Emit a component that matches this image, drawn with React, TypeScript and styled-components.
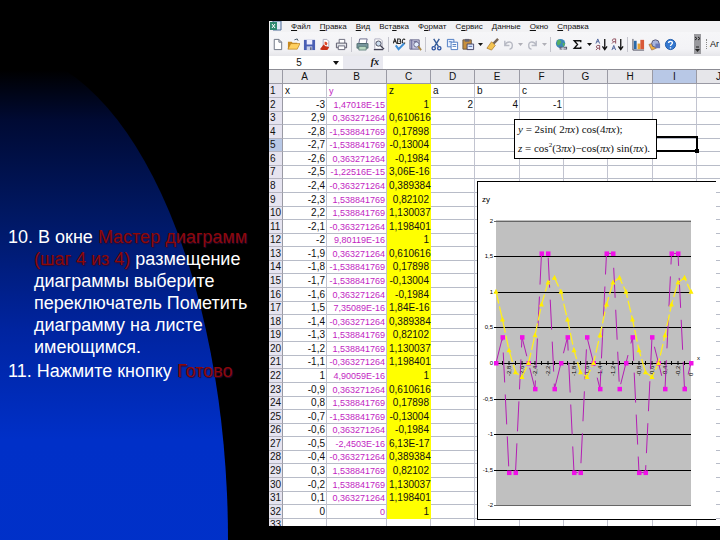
import React from "react";
import styled, { createGlobalStyle, css } from "styled-components";

const SANS = '"Liberation Sans", Arial, sans-serif';

const GlobalStyle = createGlobalStyle`
  * { box-sizing: border-box; }
  body { margin: 0; background: #000; }
  button, input { font: inherit; color: inherit; border: 0; padding: 0; margin: 0; background: none; }
`;

const Slide = styled.main`
  position: relative;
  display: grid;
  grid-template-columns: 269px minmax(0, 1fr);
  height: 100vh;
  padding: 21px 0 14px;
  overflow: hidden;
  background: #000;
  font-family: ${SANS};

  &::before {
    content: "";
    position: absolute;
    left: -228px;
    top: 50px;
    width: 456px;
    height: 980px;
    border-radius: 50%;
    background: linear-gradient(#000 0, #000 20px, #000a33 70px, #001760 160px, #0024a0 280px, #0030c8 390px, #0033cc 100%);
  }
`;

const Notes = styled.section`
  position: relative;
  padding: 205px 0 0 8px;
  color: #fff;
  font-size: 18px;
  line-height: 22px;
`;

const Step = styled.p`
  margin: 0 0 2px;
  padding-left: 26px;
  text-indent: -26px;
`;

const Term = styled.span`
  color: #8c0808;
  text-shadow: 1px 1px 1px #30082c;
`;

const Workbook = styled.section`
  position: relative;
  display: flex;
  flex-direction: column;
  min-width: 0;
  min-height: 0;
  overflow: hidden;
  background: #fff;
  color: #111;
  font-size: 10px;
`;

const MenuBar = styled.nav`
  display: flex;
  align-items: center;
  gap: 9px;
  height: 11px;
  padding-left: 1px;
  overflow: hidden;
  background: #f2f2f4;
  font-size: 8px;
  line-height: 9px;
`;

const MenuButton = styled.button`
  white-space: nowrap;
  line-height: 9px;
`;

const ToolBar = styled.div`
  display: flex;
  align-items: center;
  height: 24px;
  overflow: hidden;
  background: linear-gradient(#f6f6f8, #f3f3f6 70%, #e6e6ea);
`;

const ToolButton = styled.button<{ $narrow?: boolean }>`
  flex: none;
  display: grid;
  place-items: center;
  width: ${(p) => (p.$narrow ? 8 : 16)}px;
  height: 18px;
`;

const Separator = styled.span`
  flex: none;
  width: 1px;
  height: 15px;
  margin: 0 2px;
  background: #c4c4cc;
`;

const Spacer = styled.span`
  flex: 1;
`;

const Overflow = styled.button`
  display: grid;
  place-items: center;
  width: 7px;
  height: 20px;
  margin-right: 5px;
  background: #9a9a9e;
`;

const FontName = styled.span`
  flex: none;
  width: 14px;
  border-left: 1px dotted #888;
  padding-left: 3px;
  white-space: nowrap;
  font-size: 9px;
`;

const FormulaBar = styled.div`
  display: flex;
  height: 13px;
  background: #e9e9f0;
`;

const NameBox = styled.input`
  width: 60px;
  background: #fff;
  text-align: center;
`;

const NameArrow = styled.button`
  display: grid;
  place-items: center;
  width: 14px;
  background: #fff;
`;

const FxLabel = styled.label`
  width: 40px;
  padding-right: 4px;
  text-align: right;
  font: italic bold 10px/12px "Liberation Serif", serif;
`;

const FormulaInput = styled.input`
  flex: 1;
  min-width: 0;
  background: #fff;
`;

const GridArea = styled.div`
  position: relative;
  flex: 1;
  min-height: 0;
  overflow: hidden;
`;

const Table = styled.table`
  width: 100%;
  min-width: 472px;
  table-layout: fixed;
  border-collapse: separate;
  border-spacing: 0;
  line-height: 12px;

  tbody tr { height: 14px; }
  tbody tr:nth-child(7n + 3), tbody tr:nth-child(7n + 5), tbody tr:nth-child(7n) { height: 13px; }
`;

const Col = styled.col<{ $w?: number }>`
  ${(p) => p.$w && css`width: ${p.$w}px;`}
`;

const ColHead = styled.th<{ $on?: boolean }>`
  height: 15px;
  padding: 0;
  border-top: 1px solid #8c8c94;
  border-right: 1px solid #9a9aa4;
  border-bottom: 1px solid #9a9aa4;
  background: ${(p) => (p.$on ? "#b8c8e6" : "#e6e6ea")};
  font-weight: 400;
  overflow: hidden;
`;

const RowHead = styled.th<{ $on?: boolean }>`
  padding: 0 0 0 1px;
  border-right: 1px solid #9a9aa4;
  border-bottom: 1px solid #b4b4c0;
  background: ${(p) => (p.$on ? "#b8c8e6" : "#e6e4f0")};
  font-weight: 400;
  text-align: left;
`;

const Cell = styled.td<{ $tone?: "pink" | "yellow"; $text?: boolean }>`
  padding: 0 1px 0 2px;
  border-right: 1px solid #c2c4d0;
  border-bottom: 1px solid #b8bcc8;
  text-align: ${(p) => (p.$text ? "left" : "right")};
  white-space: nowrap;
  ${(p) => p.$tone === "pink" && css`color: #c21ec2; font-size: 9px;`}
  ${(p) => p.$tone === "yellow" && css`background: #ff0; border-color: #ff0;`}
`;

const Selection = styled.div`
  position: absolute;
  left: 384px;
  top: 67px;
  width: 45px;
  height: 16px;
  border: 2px solid #000;
  &::after {
    content: "";
    position: absolute;
    right: -3px;
    bottom: -3px;
    width: 4px;
    height: 4px;
    background: #000;
  }
`;

const FormulaNote = styled.div`
  position: absolute;
  left: 245px;
  top: 50px;
  width: 143px;
  height: 40px;
  padding: 0 3px;
  border: 1px solid #000;
  background: #fff;
  font: 11px/19px "Liberation Serif", serif;
  white-space: nowrap;
  sup { font-size: 7px; line-height: 0; }
`;

const ChartFrame = styled.figure`
  position: absolute;
  left: 208px;
  top: 112px;
  margin: 0;
  border: solid #000;
  border-width: 1px 0 1px 1px;
  background: #fff;
  svg { display: block; }
`;

const Y1 = "1,538841769";
const Y0 = "0,363271264";
const ROWS: [string, string, string][] = [
  ["-3", "1,47018E-15", "1"],
  ["2,9", Y0, "0,610616"],
  ["-2,8", "-" + Y1, "0,17898"],
  ["-2,7", "-" + Y1, "-0,13004"],
  ["-2,6", Y0, "-0,1984"],
  ["-2,5", "-1,22516E-15", "3,06E-16"],
  ["-2,4", "-" + Y0, "0,389384"],
  ["-2,3", Y1, "0,82102"],
  ["2,2", Y1, "1,130037"],
  ["-2,1", "-" + Y0, "1,198401"],
  ["-2", "9,80119E-16", "1"],
  ["-1,9", Y0, "0,610616"],
  ["-1,8", "-" + Y1, "0,17898"],
  ["-1,7", "-" + Y1, "-0,13004"],
  ["-1,6", Y0, "-0,1984"],
  ["1,5", "7,35089E-16", "1,84E-16"],
  ["-1,4", "-" + Y0, "0,389384"],
  ["-1,3", Y1, "0,82102"],
  ["-1,2", Y1, "1,130037"],
  ["-1,1", "-" + Y0, "1,198401"],
  ["1", "4,90059E-16", "1"],
  ["-0,9", Y0, "0,610616"],
  ["0,8", Y1, "0,17898"],
  ["-0,7", "-" + Y1, "-0,13004"],
  ["-0,6", Y0, "-0,1984"],
  ["-0,5", "-2,4503E-16", "6,13E-17"],
  ["-0,4", "-" + Y0, "0,389384"],
  ["0,3", Y1, "0,82102"],
  ["-0,2", Y1, "1,130037"],
  ["0,1", Y0, "1,198401"],
  ["0", "0", "1"],
];

const COLUMNS = ["A", "B", "C", "D", "E", "F", "G", "H", "I", "J"];
const WIDTHS = [14, 44, 60, 44, 44, 45, 44, 44, 45, 44, 44];
const REST = ["D", "E", "F", "G", "H", "I", "J"];

/* Chart */
const PINK = [0, 0.363, -1.539, -1.539, 0.363, 0, -0.363, 1.539, 1.539, -0.363];
const YELLOW = [1, 0.611, 0.179, -0.13, -0.198, 0, 0.389, 0.821, 1.13, 1.198];
const px = (i: number) => 18 + i * 6.5;
const py = (v: number) => 181 - v * 71.2;
const points = (s: number[]) => Array.from({ length: 31 }, (_, i) => [px(i), py(s[i % 10])]);
const path = (pts: number[][]) => pts.map((p) => p.join(",")).join(" ");
const X_LABELS: [number, string][] = [
  [2, "-2,8"], [4, "-2,6"], [6, "-2,4"], [8, "-2,2"], [12, "-1,8"], [14, "-1,6"], [16, "-1,4"],
  [18, "-1,2"], [22, "-0,8"], [24, "-0,6"], [26, "-0,4"], [28, "-0,2"], [30, "0"],
];
const Y_LABELS: [number, string][] = [
  [2, "2"], [1.5, "1,5"], [1, "1"], [0.5, "0,5"], [0, "0"], [-0.5, "-0,5"], [-1, "-1"], [-1.5, "-1,5"], [-2, "-2"],
];

const Chart = () => {
  const pink = points(PINK);
  const yellow = points(YELLOW);
  return (
    <ChartFrame>
      <svg width="238" height="337" fontFamily="Liberation Sans, Arial, sans-serif" fontSize="6">
        <text x="4" y="20" fontSize="8">zy</text>
        <rect x="18" y="38" width="195" height="286" fill="#c0c0c0" />
        {Y_LABELS.map(([v, label]) => (
          <g key={label}>
            <rect x="16" y={Math.round(py(v))} width="197" height="1" fill={Math.abs(v) === 2 ? "#666" : "#000"} />
            <text x="15" y={py(v) + 2} textAnchor="end">{label}</text>
          </g>
        ))}
        {pink.map(([x]) => <rect key={x} x={x - 0.5} y="179" width="1" height="4" />)}
        {X_LABELS.map(([i, label]) => (
          <text key={label} transform={`translate(${px(i) + 2} 194) rotate(-90)`}>{label}</text>
        ))}
        <text x="219" y="178">x</text>
        <polyline points={path(pink)} fill="none" stroke="#b41eb4" strokeDasharray="30 12" />
        <polyline points={path(yellow)} fill="none" stroke="#ffee20" strokeWidth="1.3" strokeDasharray="12 3" />
        {pink.map(([x, y]) => <rect key={x} x={x - 2} y={y - 2} width="4.500" height="4.500" fill="#f010e8" />)}
        {yellow.map(([x, y]) => <path key={x} d={`M${x} ${y - 3}l2.500 5h-5z`} fill="#ffee00" />)}
      </svg>
    </ChartFrame>
  );
};

/* Toolbar drawings, each on a 14 × 14 canvas */
const ICONS: Record<string, React.ReactNode> = {
  new: <path d="M3.500 1.500h5l3 3v8h-8zM8.500 1.500v3h3" fill="#fff" stroke="#6a7080" />,
  open: <><path d="M1 12V4h4l1 1h5v3z" fill="#c88a20" /><path d="M1 12l3-6h10l-3 6z" fill="#ffd060" stroke="#b87a18" strokeWidth=".7" /><path d="M8 2l3-1 1 2" fill="none" stroke="#456" /></>,
  save: <><path d="M1 2h12v11H1z" fill="#4a5fb4" /><path d="M4 2h6v5H4z" fill="#eef" /><path d="M4 9h6v4H4z" fill="#c8d0e8" /><path d="M8 10h1v3H8z" fill="#224" /></>,
  rights: <><path d="M4.500 1.500h4l2 2v6h-6z" fill="#fff" stroke="#aab" /><path d="M6 4c3 0 4 2 2 4l-2-1z" fill="#e04828" /><path d="M1 12l4-5 2 2 4 1-2 3H3z" fill="#c83018" /></>,
  mail: <><path d="M4.500 1.500h6v5h-6z" fill="#fff" stroke="#667" /><path d="M1.500 5.500h11v5h-11z" fill="#e4e6ea" stroke="#556" /><path d="M3.500 8.500h7v4h-7z" fill="#fff" stroke="#667" /></>,
  print: <><path d="M4 1h8l-1 5H3z" fill="#fff" stroke="#668" /><path d="M1 6h12v5H1z" fill="#7b9aa0" stroke="#355" strokeWidth=".7" /><path d="M3 9h8v4H3z" fill="#b8d8c0" stroke="#466" strokeWidth=".7" /></>,
  preview: <><path d="M3 1h6l2 2v9H3z" fill="#fff" stroke="#aab" /><circle cx="7" cy="6" r="2.800" fill="#cde" stroke="#445" /><path d="M9 8l4 4M2 12.500h10" stroke="#445" strokeWidth="1.400" /></>,
  spell: <><path d="M0 6l2-5 2 5M1 4h2M5 1v5h2c2 0 2-2.500 0-2.500C8.500 3.500 8.500 1 7 1zM13 2c-1-1.500-3-1-3 1.500S12 6.500 13 5" fill="none" stroke="#222" strokeWidth="1.100" /><path d="M3 8l3 4 6-6" fill="none" stroke="#3f8fd8" strokeWidth="2.200" /></>,
  research: <><path d="M1 2h10v10H1z" fill="#c8c8e0" stroke="#668" /><path d="M3 2v10M5 4h4" stroke="#558" /><circle cx="8" cy="7" r="2.800" fill="#e4eefc" stroke="#668" /><path d="M10 9l3 4" stroke="#a84" strokeWidth="2" /></>,
  cut: <><path d="M4 1l5 8M10 1L5 9" stroke="#335a98" strokeWidth="1.500" /><circle cx="4" cy="11" r="1.800" fill="none" stroke="#2850a0" strokeWidth="1.400" /><circle cx="10" cy="11" r="1.800" fill="none" stroke="#2850a0" strokeWidth="1.400" /></>,
  copy: <><path d="M1.500 1.500h7v8h-7z" fill="#e8f0ff" stroke="#4a78c0" /><path d="M5.500 4.500h7v8h-7z" fill="#fff" stroke="#4a78c0" /><path d="M7 7h4M7 9h4M3 4h3" stroke="#4a78c0" /></>,
  paste: <><path d="M1 2h9v10H1z" fill="#c88f3c" stroke="#654" /><path d="M3 1h5v3H3z" fill="#667" /><path d="M5.500 6.500h7v6h-7z" fill="#e4ecff" stroke="#446" /><path d="M7 9h4" stroke="#46a" /></>,
  brush: <><path d="M13 1L8 6" stroke="#765" strokeWidth="2.600" /><path d="M6 4l4 4-4 5-5-2z" fill="#f4c450" stroke="#a87830" strokeWidth=".8" /></>,
  undo: <path d="M3 3v5h5M3 8c2-5 9-5 8 1 0 2-1 3-3 3" fill="none" stroke="#b8bac4" strokeWidth="1.500" />,
  redo: <path d="M11 3v5H6M11 8C9 3 2 3 3 9c0 2 1 3 3 3" fill="none" stroke="#b8bac4" strokeWidth="1.500" />,
  link: <><circle cx="6" cy="6" r="5" fill="#3c88b8" /><path d="M3 2c3 0 5 2 3 4s-3 3-4 0zM8 5l3 1-2 4z" fill="#58b060" /><path d="M5 11h3m1 0h4" stroke="#556" strokeWidth="3" /><path d="M6 11h6" stroke="#dde" /></>,
  sum: <path d="M10.500 4.500V3h-7L7 7l-3.500 4h7V9.500" fill="none" stroke="#111" strokeWidth="1.500" />,
  az: <><path d="M1 6l2-5 2 5M2 4h2" fill="none" stroke="#4a6098" /><path d="M5 13V8H3C1 8 1 11 3 11h2M3 11l-2 2" fill="none" stroke="#8a4858" /><path d="M10.500 1v11M8 9l2.500 3.500L13 9" fill="none" stroke="#111" strokeWidth="1.400" /></>,
  za: <><path d="M5 6V1H3C1 1 1 4 3 4h2M3 4L1 6" fill="none" stroke="#8a4858" /><path d="M1 13l2-5 2 5M2 11h2" fill="none" stroke="#4a6098" /><path d="M10.500 1v11M8 9l2.500 3.500L13 9" fill="none" stroke="#111" strokeWidth="1.400" /></>,
  chart: <><path d="M1 1v12h12" fill="none" stroke="#445" /><path d="M2 3h3v9H2z" fill="#2868a8" /><path d="M6 6h3v6H6z" fill="#e8a030" /><path d="M9 2h4v10H9z" fill="#d85838" /></>,
  draw: <><path d="M1 7l6-2 2 6-5 2z" fill="#f0b040" stroke="#964" strokeWidth=".7" /><circle cx="8" cy="6" r="4" fill="#a8b4dc" stroke="#557" /><path d="M8 6h5v5H8z" fill="#6878b8" /></>,
  help: <><circle cx="7" cy="7" r="5.500" fill="#3478d0" stroke="#1c58a8" /><path d="M5 5.500C5 3 9 3 9 5.500 9 7 7 7 7 8.500M7 10v1.300" fill="none" stroke="#fff" strokeWidth="1.500" /></>,
};

const Tool = ({ name, label }: { name: string; label: string }) => (
  <ToolButton type="button" aria-label={label}>
    <svg width="13" height="13" viewBox="0 0 14 14">{ICONS[name]}</svg>
  </ToolButton>
);

const Arrow = ({ label, dim }: { label: string; dim?: boolean }) => (
  <ToolButton type="button" $narrow aria-label={label}>
    <svg width="5" height="3"><path d="M0 0h5L2.500 3z" fill={dim ? "#b0b0b8" : "#111"} /></svg>
  </ToolButton>
);

const MENUS: [string, string, string][] = [
  ["", "Ф", "айл"], ["", "П", "равка"], ["", "В", "ид"], ["Вст", "а", "вка"], ["Ф", "о", "рмат"],
  ["С", "е", "рвис"], ["", "Д", "анные"], ["", "О", "кно"], ["", "С", "правка"],
];

export default function App() {
  return (
    <>
      <GlobalStyle />
      <Slide>
        <Notes>
          <Step>10. В окне <Term>Мастер диаграмм (шаг 4 из 4)</Term> размещение диаграммы выберите переключатель Пометить диаграмму на листе имеющимся.</Step>
          <Step>11. Нажмите кнопку <Term>Готово</Term></Step>
        </Notes>
        <Workbook>
          <MenuBar>
            <svg width="12" height="11" viewBox="0 0 12 11">
              <path d="M3 0h8v9H3z" fill="#dfe8f4" stroke="#4a6a98" />
              <path d="M0 1h7v8H0z" fill="#2f8a70" />
              <path d="M2 3l3 4M5 3L2 7" stroke="#fff" />
            </svg>
            {MENUS.map(([a, u, b]) => <MenuButton type="button" key={a + u + b}>{a}<u>{u}</u>{b}</MenuButton>)}
          </MenuBar>
          <ToolBar>
            <Tool name="new" label="Создать" />
            <Tool name="open" label="Открыть" />
            <Tool name="save" label="Сохранить" />
            <Tool name="rights" label="Разрешения" />
            <Tool name="mail" label="Сообщение" />
            <Separator />
            <Tool name="print" label="Печать" />
            <Tool name="preview" label="Просмотр" />
            <Separator />
            <Tool name="spell" label="Орфография" />
            <Tool name="research" label="Справочные материалы" />
            <Separator />
            <Tool name="cut" label="Вырезать" />
            <Tool name="copy" label="Копировать" />
            <Tool name="paste" label="Вставить" />
            <Arrow label="Параметры вставки" />
            <Tool name="brush" label="Формат по образцу" />
            <Tool name="undo" label="Отменить" />
            <Arrow label="Список отмены" dim />
            <Tool name="redo" label="Вернуть" />
            <Arrow label="Список возврата" dim />
            <Separator />
            <Tool name="link" label="Гиперссылка" />
            <Tool name="sum" label="Автосумма" />
            <Arrow label="Функции" />
            <Tool name="az" label="По возрастанию" />
            <Tool name="za" label="По убыванию" />
            <Separator />
            <Tool name="chart" label="Мастер диаграмм" />
            <Tool name="draw" label="Рисование" />
            <Tool name="help" label="Справка" />
            <Spacer />
            <Overflow type="button" aria-label="Параметры панели">
              <svg width="5" height="18"><path d="M0 2l2 1.500L0 5M3 2l2 1.500L3 5M1 12h3" fill="none" stroke="#222" /><path d="M0 14h5l-2.500 3z" fill="#222" /></svg>
            </Overflow>
            <FontName>Ar</FontName>
          </ToolBar>
          <FormulaBar>
            <NameBox aria-label="Имя ячейки" defaultValue="5" />
            <NameArrow type="button" aria-label="Список имён">
              <svg width="6" height="4"><path d="M0 0h6L3 4z" fill="#111" /></svg>
            </NameArrow>
            <FxLabel htmlFor="formula">fx</FxLabel>
            <FormulaInput id="formula" />
          </FormulaBar>
          <GridArea>
            <Table>
              <colgroup>
                {WIDTHS.map((w, i) => <Col key={i} $w={w} />)}
                <Col />
              </colgroup>
              <thead>
                <tr>
                  <ColHead />
                  {COLUMNS.map((c) => <ColHead key={c} scope="col" $on={c === "I"}>{c}</ColHead>)}
                </tr>
              </thead>
              <tbody>
                <tr>
                  <RowHead scope="row">1</RowHead>
                  <Cell $text>x</Cell>
                  <Cell $text $tone="pink">y</Cell>
                  <Cell $text $tone="yellow">z</Cell>
                  <Cell $text>a</Cell>
                  <Cell $text>b</Cell>
                  <Cell $text>c</Cell>
                  {REST.slice(3).map((c) => <Cell key={c} />)}
                </tr>
                {ROWS.map(([x, y, z], i) => (
                  <tr key={i}>
                    <RowHead scope="row" $on={i === 3}>{i + 2}</RowHead>
                    <Cell>{x}</Cell>
                    <Cell $tone="pink">{y}</Cell>
                    <Cell $tone="yellow">{z}</Cell>
                    {REST.map((c, k) => <Cell key={c}>{i === 0 ? ["2", "4", "-1"][k] : null}</Cell>)}
                  </tr>
                ))}
                <tr>
                  <RowHead scope="row">33</RowHead>
                  {COLUMNS.map((c) => <Cell key={c} />)}
                </tr>
              </tbody>
            </Table>
            <Selection />
            <FormulaNote>
              <div><i>y</i> = 2sin( 2<i>πx</i>) cos(4<i>πx</i>);</div>
              <div><i>z</i> = cos<sup>2</sup>(3<i>πx</i>)−cos(<i>πx</i>) sin(<i>πx</i>).</div>
            </FormulaNote>
            <Chart />
          </GridArea>
        </Workbook>
      </Slide>
    </>
  );
}
